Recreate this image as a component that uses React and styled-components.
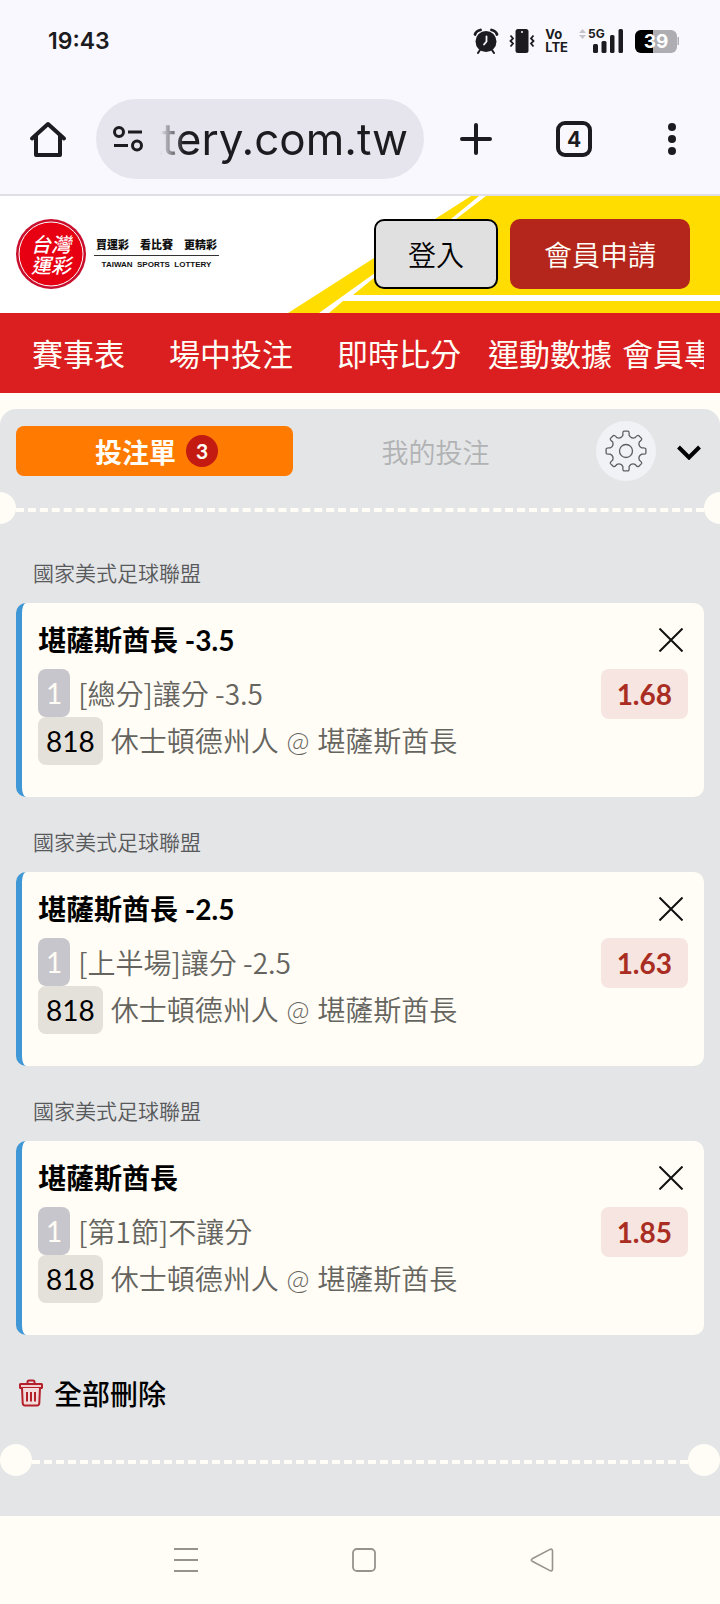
import styled, { createGlobalStyle } from "styled-components";

const GlobalStyle = createGlobalStyle`
  * {
    box-sizing: border-box;
  }
  body {
    margin: 0;
    background: #fffdf5;
    font-family: Lato, "Noto Sans CJK TC", sans-serif;
    font-size: 28px;
    color: #000;
  }
  button {
    font: inherit;
    color: inherit;
    padding: 0;
    border: 0;
    background: none;
    cursor: pointer;
  }
  svg {
    display: block;
    flex-shrink: 0;
  }
`;

const Page = styled.div`
  display: flex;
  flex-direction: column;
  min-height: 100vh;
  overflow: hidden;
`;

/* ---------- phone + browser bars ---------- */

const Chrome = styled.div`
  background: #f9f8ff;
  border-bottom: 2px solid #e0dfe6;
  color: #1b1b20;
  font-family: Inter, sans-serif;
`;

const StatusBar = styled.div`
  display: flex;
  align-items: center;
  justify-content: space-between;
  height: 82px;
  padding: 0 40px 0 48px;
`;

const Clock = styled.span`
  font-size: 23px;
  font-weight: 600;
`;

const StatusIcons = styled.div`
  display: flex;
  align-items: center;
  gap: 10px;
`;

const VoLte = styled.span`
  font-size: 13px;
  font-weight: 700;
  line-height: 13px;
`;

const BrowserBar = styled.div`
  display: flex;
  align-items: center;
  height: 112px;
  padding: 6px 24px 4px 24px;
`;

const BarButton = styled.button`
  display: flex;
  align-items: center;
  justify-content: center;
  width: 48px;
  height: 48px;
`;

const AddressBar = styled.button`
  display: flex;
  align-items: center;
  flex: 1;
  min-width: 0;
  height: 80px;
  margin: 0 28px 0 24px;
  padding: 0 16px;
  border-radius: 40px;
  background: #e6e5ed;
`;

const Url = styled.span`
  display: flex;
  justify-content: flex-end;
  flex: 1;
  min-width: 0;
  margin-left: 16px;
  overflow: hidden;
  font-size: 44px;
  line-height: 64px;
  white-space: nowrap;
  mask-image: linear-gradient(to right, transparent, #000 24px);
`;

const BarActions = styled.div`
  display: flex;
  gap: 50px;
`;

/* ---------- site header ---------- */

const Header = styled.header`
  position: relative;
  display: flex;
  align-items: center;
  justify-content: space-between;
  height: 117px;
  padding: 0 30px 1px 16px;
  background: #fff;
`;

const Stripes = styled.svg`
  position: absolute;
  top: 0;
  right: 0;
`;

const Brand = styled.a`
  display: flex;
  align-items: center;
  gap: 8px;
  color: #111;
  text-decoration: none;
`;

const Slogan = styled.div`
  display: flex;
  flex-direction: column;
  align-items: center;
`;

const SloganZh = styled.span`
  padding: 0 2px;
  border-bottom: 1px solid #333;
  font-size: 11px;
  font-weight: 900;
  line-height: 20px;
`;

const SloganEn = styled.span`
  font-family: "Liberation Sans", sans-serif;
  font-size: 8px;
  font-weight: 700;
  line-height: 17px;
  white-space: pre;
`;

const Account = styled.div`
  position: relative;
  display: flex;
  gap: 12px;
`;

const AccountButton = styled.button`
  height: 70px;
  padding: 0 ${(p) => (p.$primary ? 34 : 32)}px;
  border: ${(p) => (p.$primary ? "0" : "2px solid #000")};
  border-radius: 10px;
  background: ${(p) => (p.$primary ? "#b4261b" : "#e0e0e0")};
  color: ${(p) => (p.$primary ? "#fffdf5" : "#000")};
  font-weight: 350;
`;

const Nav = styled.nav`
  background: #db1e20;
  padding: 0 16px 0 10px;
`;

const NavScroll = styled.div`
  display: flex;
  align-items: center;
  height: 80px;
  padding-bottom: 2px;
  overflow: hidden;
`;

const NavLink = styled.a`
  flex-shrink: 0;
  padding: 0 ${(p) => (p.$tight ? 5 : 22)}px;
  color: #fffdf5;
  font-size: 31px;
  text-decoration: none;
`;

/* ---------- bet slip ---------- */

const Slip = styled.main`
  flex: 1;
  margin-top: 16px;
  border-radius: 16px 16px 0 0;
  background: #e4e5e7;
`;

const SlipHeader = styled.div`
  display: flex;
  align-items: center;
  gap: 24px;
  padding: 12px 16px 11px;
`;

const Tabs = styled.div`
  display: flex;
  flex: 1;
  gap: 6px;
`;

const Tab = styled.button`
  display: flex;
  align-items: center;
  justify-content: center;
  flex: 1;
  gap: 10px;
  height: 50px;
  padding-left: ${(p) => (p.$active ? 4 : 0)}px;
  border-radius: 8px;
  background: ${(p) => (p.$active ? "#ff7a00" : "transparent")};
  color: ${(p) => (p.$active ? "#fffdf5" : "#b1b2b4")};
  font-size: 27px;
  font-weight: ${(p) => (p.$active ? 700 : 350)};
`;

const Count = styled.span`
  width: 32px;
  height: 32px;
  border-radius: 50%;
  background: #c31a12;
  font-size: 21px;
  line-height: 32px;
  text-align: center;
`;

const Tools = styled.div`
  display: flex;
  align-items: center;
  gap: 18px;
`;

const GearButton = styled.button`
  display: flex;
  align-items: center;
  justify-content: center;
  width: 60px;
  height: 60px;
  border-radius: 50%;
  background: #f1f2f5;
`;

const ToggleButton = styled.button`
  display: flex;
  justify-content: center;
  width: 30px;
`;

const Divider = styled.div`
  display: flex;
  align-items: center;
  margin: 0 ${(p) => (p.$cut ? "-16px" : "0")};
`;

const Notch = styled.span`
  width: 32px;
  height: 32px;
  border-radius: 50%;
  background: #fffdf5;
`;

const Dashes = styled.span`
  flex: 1;
  margin-top: 4px;
  border-top: 4px dashed #fffdf5;
`;

const Bets = styled.div`
  padding: 4px 16px 0;
`;

const League = styled.h2`
  margin: 0;
  padding: 15px 17px 0;
  color: #58595b;
  font-size: 21px;
  font-weight: 350;
  line-height: 60px;
`;

const Card = styled.article`
  display: flex;
  justify-content: space-between;
  padding: 16px 16px 32px;
  border-left: 6px solid #3f97d5;
  border-radius: 10px;
  background: #fffdf5;
`;

const Info = styled.div`
  min-width: 0;
`;

const Pick = styled.h3`
  margin: 0 0 8px;
  font-size: 28px;
  font-weight: 700;
  line-height: 42px;
`;

const Line = styled.div`
  display: flex;
  align-items: center;
  gap: 8px;
  color: #65645f;
  font-weight: 350;
  line-height: 48px;
`;

const Market = styled.span`
  font-family: "Noto Sans CJK TC", sans-serif;
`;

const Chip = styled.span`
  padding: 0 8px;
  border-radius: 8px;
  background: ${(p) => (p.$muted ? "#c8c6cd" : "#e4e1db")};
  color: ${(p) => (p.$muted ? "#fffdf5" : "#000")};
  font-weight: 400;
`;

const Side = styled.div`
  display: flex;
  flex-direction: column;
  align-items: flex-end;
  gap: 8px;
`;

const CloseButton = styled.button`
  display: flex;
  align-items: center;
  justify-content: center;
  width: 34px;
  height: 42px;
`;

const Odds = styled.span`
  padding: 0 16px;
  border-radius: 8px;
  background: #f6e5e0;
  color: #a92d22;
  font-weight: 700;
  line-height: 50px;
`;

const ClearButton = styled.button`
  display: flex;
  align-items: center;
  gap: 10px;
  margin: 33px 18px 27px;
  height: 49px;
  font-weight: 500;
`;

const SlipFooter = styled.div`
  height: 40px;
`;

const SystemNav = styled.div`
  display: flex;
  align-items: center;
  justify-content: center;
  gap: 130px;
  height: 88px;
  padding-left: 8px;
`;

/* ---------- icons ---------- */

const AlarmIcon = () => (
  <svg width="26" height="26" viewBox="0 0 26 26" fill="none" stroke="#1b1b20" strokeLinecap="round">
    <circle cx="13" cy="13.500" r="10.500" fill="#1b1b20" stroke="none" />
    <path d="M2 6.500Q3 3 7.500 2M24 6.500Q23 3 18.500 2" strokeWidth="2.800" />
    <path d="M7 22l-2 3M19 22l2 3" strokeWidth="2" />
    <path d="M13.500 8.500v5l-2.500 3" stroke="#f9f8ff" strokeWidth="1.800" />
  </svg>
);

const VibrateIcon = () => (
  <svg width="26" height="26" viewBox="0 0 26 26" fill="none" stroke="#1b1b20" strokeWidth="1.800">
    <rect x="6.500" y="1" width="13" height="24" rx="2.500" fill="#1b1b20" stroke="none" />
    <circle cx="13" cy="4" r="1" fill="#f9f8ff" stroke="none" />
    <path d="M1.500 7.500l2.500 3-2.500 2.500 2.500 2.500-2.500 3M24.500 7.500l-2.500 3 2.500 2.500-2.500 2.500 2.500 3" />
  </svg>
);

const SignalIcon = () => (
  <svg width="46" height="32" viewBox="0 -3 46 32" fill="#1b1b20">
    <path d="M1 5l3.500-4L8 5zM1 7l3.500 4L8 7z" fill="#c4c4ca" />
    <text x="10" y="10" fontSize="12" fontWeight="700" fontFamily="Inter, sans-serif">5G</text>
    <rect x="15" y="16" width="5" height="9" rx="1.500" />
    <rect x="23.500" y="13" width="5" height="12" rx="1.500" />
    <rect x="32" y="7" width="4.500" height="18" rx="1.500" />
    <rect x="40.500" y="1" width="4.500" height="24" rx="1.500" />
  </svg>
);

const BatteryIcon = () => (
  <svg width="46" height="26" viewBox="0 0 46 26">
    <rect x="1" y="2" width="42" height="23" rx="6" fill="#adadb2" />
    <path d="M43.500 9h1.500v8h-1.500z" fill="#adadb2" />
    <path d="M7 2h12v23H7a6 6 0 0 1-6-6V8a6 6 0 0 1 6-6z" fill="#000" />
    <text x="22" y="20" fontSize="19" fontWeight="700" fontFamily="Inter, sans-serif" fill="#fff" textAnchor="middle">39</text>
  </svg>
);

const HomeIcon = () => (
  <svg width="38" height="38" viewBox="0 0 38 38" fill="none" stroke="#1b1b20" strokeWidth="4" strokeLinecap="round" strokeLinejoin="round">
    <path d="M3 18.500L19 4l16 14.500" />
    <path d="M7 16v19h24V16" />
  </svg>
);

const TuneIcon = () => (
  <svg width="32" height="28" viewBox="0 0 32 28" fill="none" stroke="#1b1b20" strokeWidth="3">
    <circle cx="7" cy="7" r="4.500" />
    <path d="M16 7h14M2 20.500h14" />
    <circle cx="25" cy="20.500" r="4.500" />
  </svg>
);

const PlusIcon = () => (
  <svg width="34" height="34" viewBox="0 0 34 34" stroke="#1b1b20" strokeWidth="4" strokeLinecap="round">
    <path d="M17 3v28M3 17h28" />
  </svg>
);

const TabsIcon = () => (
  <svg width="36" height="36" viewBox="0 0 36 36">
    <rect x="2" y="2" width="32" height="32" rx="7" fill="none" stroke="#1b1b20" strokeWidth="4" />
    <text x="18" y="26" fontSize="21" fontWeight="700" fontFamily="Inter, sans-serif" fill="#1b1b20" textAnchor="middle">4</text>
  </svg>
);

const DotsIcon = () => (
  <svg width="8" height="32" viewBox="0 0 8 32" fill="#1b1b20">
    <circle cx="4" cy="4" r="4" />
    <circle cx="4" cy="16" r="4" />
    <circle cx="4" cy="28" r="4" />
  </svg>
);

const Seal = () => (
  <svg width="70" height="70" viewBox="0 0 70 70">
    <circle cx="35" cy="35" r="35" fill="#c8102e" />
    <circle cx="35" cy="35" r="32" fill="#e60012" stroke="#fff" />
    <g fill="#fff" fontSize="20" fontWeight="500" fontStyle="italic" fontFamily='"Noto Sans CJK TC", sans-serif' textAnchor="middle">
      <text x="35" y="33">台灣</text>
      <text x="35" y="54">運彩</text>
    </g>
  </svg>
);

const polar = (angle, r) => {
  const rad = (angle * Math.PI) / 180;
  return `${(21 + r * Math.cos(rad)).toFixed(2)} ${(21 + r * Math.sin(rad)).toFixed(2)}`;
};

const gearPath =
  [0, 45, 90, 135, 180, 225, 270, 315]
    .map(
      (a, i) =>
        `${i ? "L" : "M"}${polar(a - 11, 16)}Q${polar(a - 10, 20)} ${polar(a - 6, 20)}L${polar(a + 6, 20)}` +
        `Q${polar(a + 10, 20)} ${polar(a + 11, 16)}Q${polar(a + 22.5, 13)} ${polar(a + 34, 16)}`
    )
    .join("") + "Z";

const GearIcon = () => (
  <svg width="42" height="42" viewBox="0 0 42 42" fill="none" stroke="#5d5e62" strokeWidth="1.300" strokeLinejoin="round">
    <path d={gearPath} />
    <circle cx="21" cy="21" r="6.500" />
  </svg>
);

const ChevronIcon = () => (
  <svg width="24" height="18" viewBox="0 0 24 18" fill="none" stroke="#000" strokeWidth="4">
    <path d="M1.500 5L12 15.500 22.500 5" />
  </svg>
);

const CloseIcon = () => (
  <svg width="24" height="24" viewBox="0 0 24 24" stroke="#111" strokeWidth="2">
    <path d="M.5.5l23 23M23.500.5l-23 23" />
  </svg>
);

const TrashIcon = () => (
  <svg width="26" height="28" viewBox="0 0 26 28" fill="none" stroke="#b3202a" strokeWidth="2" strokeLinejoin="round">
    <path d="M9.500 5V3q0-1.500 1.500-1.500h4q1.500 0 1.500 1.500v2" />
    <rect x="2" y="5" width="22" height="4" rx=".5" fill="#f2cfd0" />
    <path d="M4 9l.7 15q.1 2.500 2.300 2.500h12q2.200 0 2.300-2.500L22 9" fill="#f3dcdc" />
    <path d="M9 13v9.500M13 13v9.500M17 13v9.500" />
  </svg>
);

const MenuIcon = () => (
  <svg width="24" height="24" viewBox="0 0 24 24" stroke="#96938e" strokeWidth="2">
    <path d="M0 1h24M0 12h24M0 23h24" />
  </svg>
);

const SquareIcon = () => (
  <svg width="24" height="24" viewBox="0 0 24 24" fill="none" stroke="#96938e" strokeWidth="1.800">
    <rect x="1" y="1" width="22" height="22" rx="4" />
  </svg>
);

const BackIcon = () => (
  <svg width="24" height="24" viewBox="0 0 24 24" fill="none" stroke="#96938e" strokeWidth="1.600" strokeLinejoin="round">
    <path d="M2.200 10.800L20 1.400q2.500-1 2.500 1.600v18q0 2.600-2.500 1.600L2.200 13.200q-1.800-1.200 0-2.400z" />
  </svg>
);

const bets = [
  { id: 1, pick: "堪薩斯酋長 -3.5", market: "[總分]讓分 -3.5", odds: "1.68" },
  { id: 2, pick: "堪薩斯酋長 -2.5", market: "[上半場]讓分 -2.5", odds: "1.63" },
  { id: 3, pick: "堪薩斯酋長", market: "[第1節]不讓分", odds: "1.85" },
];

const BetCard = ({ bet }) => {
  return (
    <>
      <League>國家美式足球聯盟</League>
      <Card>
        <Info>
          <Pick>{bet.pick}</Pick>
          <Line>
            <Chip $muted>1</Chip>
            <Market>{bet.market}</Market>
          </Line>
          <Line>
            <Chip>818</Chip>
            休士頓德州人 @ 堪薩斯酋長
          </Line>
        </Info>
        <Side>
          <CloseButton aria-label="刪除">
            <CloseIcon />
          </CloseButton>
          <Odds>{bet.odds}</Odds>
        </Side>
      </Card>
    </>
  );
};

const App = () => {
  return (
    <Page>
      <GlobalStyle />
      <Chrome>
        <StatusBar>
          <Clock>19:43</Clock>
          <StatusIcons>
            <AlarmIcon />
            <VibrateIcon />
            <VoLte>
              Vo
              <br />
              LTE
            </VoLte>
            <SignalIcon />
            <BatteryIcon />
          </StatusIcons>
        </StatusBar>
        <BrowserBar>
          <BarButton aria-label="首頁">
            <HomeIcon />
          </BarButton>
          <AddressBar>
            <TuneIcon />
            <Url>ttery.com.tw</Url>
          </AddressBar>
          <BarActions>
            <BarButton aria-label="新分頁">
              <PlusIcon />
            </BarButton>
            <BarButton aria-label="分頁">
              <TabsIcon />
            </BarButton>
            <BarButton aria-label="選單">
              <DotsIcon />
            </BarButton>
          </BarActions>
        </BrowserBar>
      </Chrome>

      <Header>
        <Stripes width="432" height="117" viewBox="0 0 432 117">
          <path d="M183 0H432V117H0z" fill="#ffdd00" />
          <path d="M191 0h7L168 23 87 81 65 99H432v6H55L41 117H31L87 77 163 23z" fill="#fff" />
        </Stripes>
        <Brand href="#">
          <Seal />
          <Slogan>
            <SloganZh>買運彩　看比賽　更精彩</SloganZh>
            <SloganEn>TAIWAN  SPORTS  LOTTERY</SloganEn>
          </Slogan>
        </Brand>
        <Account>
          <AccountButton>登入</AccountButton>
          <AccountButton $primary>會員申請</AccountButton>
        </Account>
      </Header>

      <Nav>
        <NavScroll>
          <NavLink href="#">賽事表</NavLink>
          <NavLink href="#">場中投注</NavLink>
          <NavLink href="#">即時比分</NavLink>
          <NavLink href="#" $tight>運動數據</NavLink>
          <NavLink href="#" $tight>會員專區</NavLink>
        </NavScroll>
      </Nav>

      <Slip>
        <SlipHeader>
          <Tabs>
            <Tab $active>
              投注單
              <Count>3</Count>
            </Tab>
            <Tab>我的投注</Tab>
          </Tabs>
          <Tools>
            <GearButton aria-label="設定">
              <GearIcon />
            </GearButton>
            <ToggleButton aria-label="收合">
              <ChevronIcon />
            </ToggleButton>
          </Tools>
        </SlipHeader>
        <Divider $cut>
          <Notch />
          <Dashes />
          <Notch />
        </Divider>
        <Bets>
          {bets.map((bet) => (
            <BetCard key={bet.id} bet={bet} />
          ))}
        </Bets>
        <ClearButton>
          <TrashIcon />
          全部刪除
        </ClearButton>
        <Divider>
          <Notch />
          <Dashes />
          <Notch />
        </Divider>
        <SlipFooter />
      </Slip>

      <SystemNav>
        <BarButton aria-label="最近使用">
          <MenuIcon />
        </BarButton>
        <BarButton aria-label="主畫面">
          <SquareIcon />
        </BarButton>
        <BarButton aria-label="返回">
          <BackIcon />
        </BarButton>
      </SystemNav>
    </Page>
  );
};

export default App;
